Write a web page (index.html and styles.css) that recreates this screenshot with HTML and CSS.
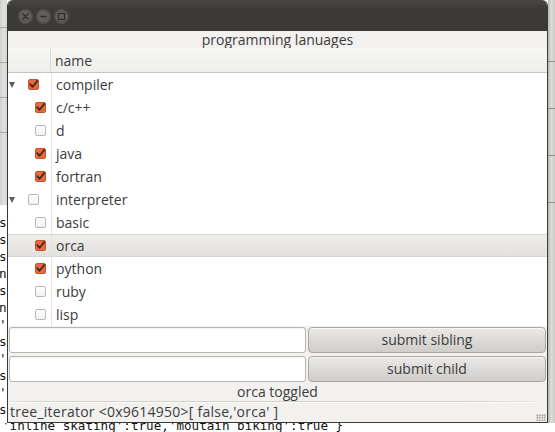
FILE: index.html
```html
<!DOCTYPE html>
<html>
<head>
<meta charset="utf-8">
<link rel="stylesheet" href="styles.css">
</head>
<body>
<div class="screen">
  <div class="side left">
    <div class="panel">
      <div class="pl"></div><div class="pl"></div><div class="pl"></div><div class="pl"></div>
    </div>
    <div class="term">
      <div>s</div><div>s</div><div>s</div><div>n</div><div>s</div><div>n</div><div>'</div><div>s</div><div>'</div><div>s</div><div>'</div><div>s</div>
    </div>
  </div>
  <div class="window">
    <div class="titlebar">
      <span class="wbtn">
        <svg viewBox="0 0 15 15" width="15" height="15"><path d="M5 5 L10 10 M10 5 L5 10" stroke="#2e2d2a" stroke-width="1.4" stroke-linecap="round"/></svg>
      </span>
      <span class="wbtn">
        <svg viewBox="0 0 15 15" width="15" height="15"><path d="M4.5 7.5 H10.5" stroke="#2e2d2a" stroke-width="1.4"/></svg>
      </span>
      <span class="wbtn">
        <svg viewBox="0 0 15 15" width="15" height="15"><rect x="4.5" y="4.5" width="6" height="6" fill="none" stroke="#2e2d2a" stroke-width="1.2"/></svg>
      </span>
    </div>
    <div class="content">
      <div class="caption">programming lanuages</div>
      <div class="tree">
        <div class="thead"><div class="c0"></div><div class="c1">name</div></div>
        <div class="row"><div class="c0"><span class="exp"></span><span class="cb on"></span></div><div class="c1">compiler</div></div>
        <div class="row"><div class="c0 child"><span class="cb on"></span></div><div class="c1">c/c++</div></div>
        <div class="row"><div class="c0 child"><span class="cb"></span></div><div class="c1">d</div></div>
        <div class="row"><div class="c0 child"><span class="cb on"></span></div><div class="c1">java</div></div>
        <div class="row"><div class="c0 child"><span class="cb on"></span></div><div class="c1">fortran</div></div>
        <div class="row"><div class="c0"><span class="exp"></span><span class="cb"></span></div><div class="c1">interpreter</div></div>
        <div class="row"><div class="c0 child"><span class="cb"></span></div><div class="c1">basic</div></div>
        <div class="row sel"><div class="c0 child"><span class="cb on"></span></div><div class="c1">orca</div></div>
        <div class="row"><div class="c0 child"><span class="cb on"></span></div><div class="c1">python</div></div>
        <div class="row"><div class="c0 child"><span class="cb"></span></div><div class="c1">ruby</div></div>
        <div class="row"><div class="c0 child"><span class="cb"></span></div><div class="c1">lisp</div></div>
      </div>
      <div class="forms">
        <div class="frow"><div class="entry"></div><div class="btn">submit sibling</div></div>
        <div class="frow"><div class="entry"></div><div class="btn">submit child</div></div>
      </div>
      <div class="msg">orca toggled</div>
      <div class="status">
        <div class="sline"></div>
        <div class="stext">tree_iterator &lt;0x9614950&gt;[ false,'orca' ]</div>
        <div class="grip"></div>
      </div>
    </div>
  </div>
  <div class="side right">
    <div class="rl"></div><div class="rl"></div><div class="rl"></div><div class="rl"></div>
  </div>
</div>
<div class="bottomline">'inline skating':true,'moutain biking':true }</div>
</body>
</html>
```
FILE: styles.css
```css
html, body {
  margin: 0;
  padding: 0;
  height: 432px;
  overflow: hidden;
  background: #ffffff;
}
body {
  font-family: "Open Sans", "DejaVu Sans", sans-serif;
  color: #3c3c3c;
}
.screen {
  display: flex;
  height: 423px;
}
.side {
  width: 7px;
  flex: none;
  overflow: hidden;
}
.left {
  background: #ffffff;
  display: flex;
  flex-direction: column;
}
.left .panel {
  height: 205px;
  background: linear-gradient(to right, #cfcfcd, #e2e2e0 60%, #d2d2d0);
  display: flex;
  flex-direction: column;
  gap: 34px;
  padding-top: 27px;
  box-sizing: border-box;
}
.pl {
  height: 1px;
  background: #a9a9a7;
}
.term {
  font-family: "DejaVu Sans Mono", monospace;
  font-size: 12.6px;
  line-height: 17px;
  padding-top: 9px;
  padding-left: 0;
  color: #111;
  margin-left: -1px;
}
.right {
  background: linear-gradient(to right, #b9b9b7, #dcdcda 50%, #cacac8);
  display: flex;
  flex-direction: column;
  padding-top: 61px;
  gap: 46px;
  box-sizing: border-box;
}
.rl {
  height: 1px;
  background: #8e8e8c;
}
.window {
  width: 541px;
  flex: none;
  box-sizing: border-box;
  border: 1px solid #3a3936;
  border-top: none;
  border-radius: 6px 6px 0 0;
  background: #f2f1f0;
  display: flex;
  flex-direction: column;
  position: relative;
  overflow: hidden;
}
.titlebar {
  height: 31px;
  flex: none;
  background: linear-gradient(#484742, #3c3b37 30%, #3a3935);
  display: flex;
  align-items: center;
  padding-left: 10px;
  gap: 3px;
  padding-top: 1px;
  box-sizing: border-box;
}
.wbtn {
  width: 15px;
  height: 15px;
  border-radius: 50%;
  background: radial-gradient(circle at 50% 40%, #64635e, #55544f);
  box-shadow: inset 0 0 0 1px #4a4945;
  display: block;
}
.wbtn svg { display: block; }
.content {
  flex: 1;
  display: flex;
  flex-direction: column;
}
.caption {
  height: 17px;
  line-height: 17px;
  text-align: center;
  font-size: 14px;
}
.tree {
  background: #ffffff;
  display: flex;
  flex-direction: column;
}
.thead {
  height: 24px;
  border-bottom: 1px solid #c4c3c0;
  background: linear-gradient(#f7f7f6, #efeeed);
  display: flex;
  font-size: 14px;
}
.thead .c0 {
  width: 42px;
  border-right: 1px solid #dcdbd8;
}
.thead .c1 {
  padding-left: 4px;
  line-height: 25px;
}
.row {
  height: 23px;
  display: flex;
  font-size: 14px;
  box-sizing: border-box;
}
.row .c0 {
  width: 42px;
  flex: none;
  border-right: 1px solid #e4e4e2;
  display: flex;
  align-items: center;
  padding-left: 1px;
  box-sizing: content-box;
  position: relative;
}
.row .c0.child {
  padding-left: 27px;
  width: 16px;
}
.row .c1 {
  padding-left: 4px;
  line-height: 23px;
}
.row.sel {
  background: linear-gradient(#eeedeb, #e3e2e0);
  border-top: 1px solid #d8d7d4;
  border-bottom: 1px solid #d8d7d4;
}
.row.sel .c1 { line-height: 21px; }
.exp {
  width: 0;
  height: 0;
  border-left: 3.5px solid transparent;
  border-right: 3.5px solid transparent;
  border-top: 6px solid #5d5d5b;
  margin-right: 13px;
  margin-top: 1px;
}
.cb {
  width: 11px;
  height: 11px;
  box-sizing: border-box;
  border: 1px solid #b9b8b5;
  border-radius: 2px;
  background: linear-gradient(#ffffff, #f1f1f0);
  display: block;
}
.cb.on {
  border-color: #c5552d;
  background-color: #e8693b;
  background-image: url("data:image/svg+xml;utf8,<svg xmlns='http://www.w3.org/2000/svg' width='11' height='11' viewBox='0 0 11 11'><path d='M2.2 5.2 L4.6 7.8 L9.6 1.6' fill='none' stroke='%233a2a22' stroke-width='1.7' stroke-linecap='round' stroke-linejoin='round'/></svg>");
  background-repeat: no-repeat;
  background-position: -1px -1px;
}
.forms {
  padding: 1px 1px 0 1px;
  display: flex;
  flex-direction: column;
  gap: 3px;
}
.frow {
  display: grid;
  grid-template-columns: 297px 1fr;
  gap: 2px;
  height: 26px;
}
.entry {
  background: #ffffff;
  border: 1px solid #b7b6b3;
  border-radius: 3px;
  box-shadow: inset 0 1px 1px rgba(0,0,0,0.06);
}
.btn {
  border: 1px solid #a9a8a4;
  border-radius: 4px;
  background: linear-gradient(#ebeae8, #d9d8d6 60%, #cfcecb);
  text-align: center;
  line-height: 24px;
  font-size: 14px;
  color: #3c3c3c;
  box-shadow: inset 0 1px 0 rgba(255,255,255,0.6);
}
.msg {
  height: 19px;
  line-height: 19px;
  text-align: center;
  font-size: 14px;
}
.status {
  position: relative;
  flex: 1;
}
.sline {
  height: 1px;
  margin: 0 12px 0 1px;
  background: linear-gradient(to right, #e0dfdc, #d2d1ce 10%, #d2d1ce 85%, #e8e7e5);
  box-shadow: 0 1px 0 #fbfbfa;
}
.stext {
  padding-left: 2px;
  line-height: 19px;
  font-size: 14px;
  letter-spacing: 0.25px;
}
.grip {
  position: absolute;
  right: 1px;
  bottom: 1px;
  width: 10px;
  height: 7px;
  background-image: radial-gradient(circle, #a5a4a1 0.8px, transparent 1px);
  background-size: 2.5px 2.5px;
}
.bottomline {
  height: 9px;
  line-height: 6px;
  overflow: hidden;
  font-family: "DejaVu Sans Mono", monospace;
  font-size: 12.6px;
  color: #111;
  padding-left: 2px;
  white-space: pre;
}
```
